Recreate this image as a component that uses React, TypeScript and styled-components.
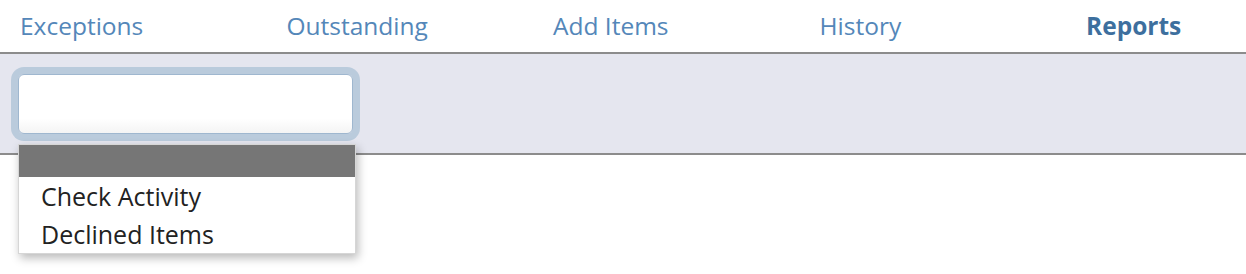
import styled, { createGlobalStyle } from "styled-components";

const GlobalStyle = createGlobalStyle`
  html, body {
    margin: 0;
    padding: 0;
    background: #ffffff;
    font-family: "Open Sans", "Noto Sans", sans-serif;
  }
`;

const Page = styled.div`
  width: 1246px;
  height: 274px;
  overflow: hidden;
`;

const Nav = styled.nav`
  display: grid;
  grid-template-columns: repeat(5, 266.5px);
  height: 52px;
  border-bottom: 2px solid #8c8c8c;
`;

const NavItem = styled.a<{ $active?: boolean }>`
  display: flex;
  align-items: center;
  padding-left: 20px;
  padding-bottom: 2px;
  font-size: 24.5px;
  font-weight: ${(p) => (p.$active ? 700 : 400)};
  color: ${(p) => (p.$active ? "#3d6f9e" : "#5487b9")};
  text-decoration: none;
  white-space: nowrap;
`;

const Toolbar = styled.div`
  height: 79px;
  padding: 20px 18px 0;
  background: #e5e6ef;
  border-bottom: 2px solid #8c8c8c;
`;

const SelectWrap = styled.div`
  position: relative;
  width: 335px;
`;

const Field = styled.div`
  box-sizing: border-box;
  height: 60px;
  border: 1px solid #9fb7cf;
  border-radius: 6px;
  background: linear-gradient(#ffffff 75%, #f4f4f4);
  box-shadow: 0 0 0 7px #bacbdc;
`;

const List = styled.ul`
  position: absolute;
  top: 70px;
  left: 0;
  width: 336px;
  margin: 0;
  padding: 0;
  list-style: none;
  background: #ffffff;
  border: 1px solid #d6d6d6;
  box-shadow: 2px 4px 9px rgba(0, 0, 0, 0.28);
  z-index: 2;
`;

const Option = styled.li<{ $selected?: boolean }>`
  height: ${(p) => (p.$selected ? "32px" : "38px")};
  line-height: 38px;
  padding-left: 22px;
  font-size: 25px;
  color: #222222;
  white-space: nowrap;
  background: ${(p) => (p.$selected ? "#767676" : "transparent")};
`;

const tabs = ["Exceptions", "Outstanding", "Add Items", "History", "Reports"];
const reports = ["", "Check Activity", "Declined Items"];

export default function App() {
  return (
    <Page>
      <GlobalStyle />
      <Nav>
        {tabs.map((t) => (
          <NavItem key={t} href="#" $active={t === "Reports"}>
            {t}
          </NavItem>
        ))}
      </Nav>
      <Toolbar>
        <SelectWrap>
          <Field />
          <List>
            {reports.map((r, i) => (
              <Option key={i} $selected={i === 0}>
                {r}
              </Option>
            ))}
          </List>
        </SelectWrap>
      </Toolbar>
    </Page>
  );
}
